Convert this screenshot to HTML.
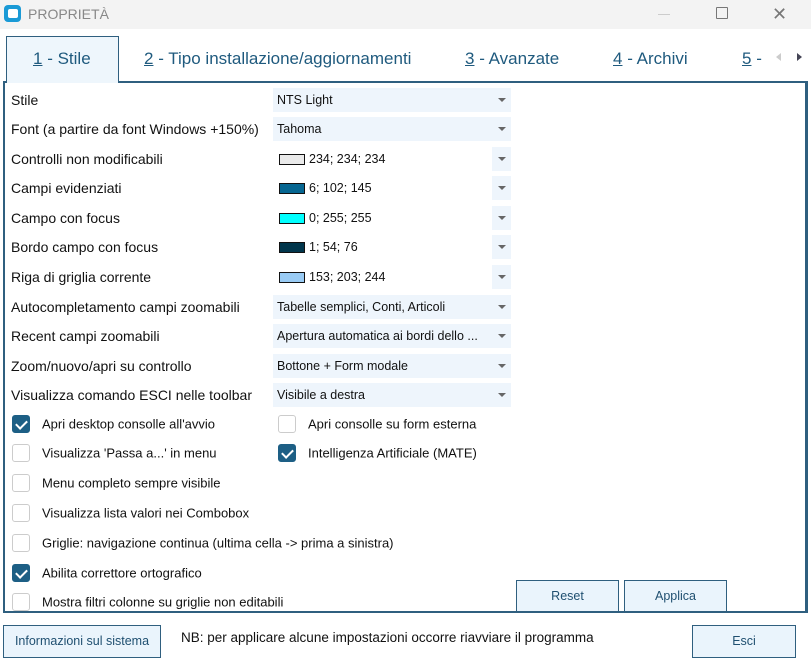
<!DOCTYPE html>
<html><head><meta charset="utf-8"><style>
*{box-sizing:border-box}
body{margin:0;width:811px;height:662px;background:#fff;font-family:"Liberation Sans",sans-serif;position:relative;overflow:hidden;color:#111}
.abs{position:absolute}
.title{left:0;top:0;width:811px;height:29px;background:#f3f3f3}
.tab{font-size:17px;color:#1f5a7e;top:49px}
.tab u{text-decoration:underline}
.lbl{font-size:14px;left:11px;transform:translateY(-50%)}
.cb{left:273px;width:238px;height:24px;background:#eef5fc;font-size:12.5px;padding:0 0 0 4px;line-height:24px;transform:translateY(-50%)}
.arr{position:absolute;right:5px;top:10px;width:0;height:0;border-left:4px solid transparent;border-right:4px solid transparent;border-top:4px solid #666}
.col{left:273px;width:238px;height:24px;transform:translateY(-50%);font-size:12.5px;line-height:24px}
.col .sw{position:absolute;left:6px;top:7px;width:26px;height:11px;border:1px solid #111}
.col .t{position:absolute;left:36px}
.col .db{position:absolute;left:219px;top:0;width:19px;height:24px;background:#eef5fc}
.chk{width:18px;height:18px;border:1px solid #ccc;border-radius:3px;background:#fff;transform:translateY(-50%)}
.chk.on{background:#1d5f85;border-color:#1d5f85}
.chk.on:after{content:"";position:absolute;left:5px;top:2px;width:5px;height:9px;border:solid #fff;border-width:0 2px 2px 0;transform:rotate(45deg)}
.cl{font-size:13px;transform:translateY(-50%)}
.btn{background:#eaf4fc;border:1px solid #2f5f7f;font-size:12.5px;color:#1f4f70;text-align:center}
</style></head><body>
<div class="abs title"></div>
<div class="abs" style="left:4px;top:5px;width:17px;height:17px;background:#1a9ad6;border-radius:4px"></div>
<div class="abs" style="left:8px;top:9px;width:10px;height:9px;background:#fff;border-radius:2px"></div>
<div class="abs" style="left:28px;top:6px;font-size:14px;color:#888">PROPRIETÀ</div>
<div class="abs" style="left:658px;top:14px;width:12px;border-top:1px solid #ccc"></div>
<div class="abs" style="left:716px;top:7px;width:12px;height:12px;border:1px solid #777;border-radius:1px"></div>
<div class="abs" style="left:772px;top:4px;font-size:18px;color:#777">✕</div>

<div class="abs" style="left:3px;top:81px;width:805px;height:532px;border:2px solid #2f5f7f;border-right-width:3px"></div>
<div class="abs" style="left:6px;top:36px;width:113px;height:47px;background:#eef6fc;border:1px solid #2f5f7f;border-bottom:none"></div>
<div class="abs tab" style="left:33px"><u>1</u> - Stile</div>
<div class="abs tab" style="left:144px"><u>2</u> - Tipo installazione/aggiornamenti</div>
<div class="abs tab" style="left:465px"><u>3</u> - Avanzate</div>
<div class="abs tab" style="left:613px"><u>4</u> - Archivi</div>
<div class="abs tab" style="left:742px"><u>5</u> -</div>
<div class="abs" style="left:776px;top:53px;border-right:5px solid #ccc;border-top:4px solid transparent;border-bottom:4px solid transparent"></div>
<div class="abs" style="left:797px;top:53px;border-left:5px solid #445;border-top:4px solid transparent;border-bottom:4px solid transparent"></div>

<div class="abs lbl" style="top:100px">Stile</div>
<div class="abs lbl" style="top:129px">Font (a partire da font Windows +150%)</div>
<div class="abs lbl" style="top:159px">Controlli non modificabili</div>
<div class="abs lbl" style="top:188px">Campi evidenziati</div>
<div class="abs lbl" style="top:218px">Campo con focus</div>
<div class="abs lbl" style="top:247px">Bordo campo con focus</div>
<div class="abs lbl" style="top:277px">Riga di griglia corrente</div>
<div class="abs lbl" style="top:307px">Autocompletamento campi zoomabili</div>
<div class="abs lbl" style="top:336px">Recent campi zoomabili</div>
<div class="abs lbl" style="top:366px">Zoom/nuovo/apri su controllo</div>
<div class="abs lbl" style="top:395px">Visualizza comando ESCI nelle toolbar</div>

<div class="abs cb" style="top:100px">NTS Light<span class="arr"></span></div>
<div class="abs cb" style="top:129px">Tahoma<span class="arr"></span></div>
<div class="abs col" style="top:159px"><span class="sw" style="background:#eaeaea"></span><span class="t">234; 234; 234</span><span class="db"><span class="arr"></span></span></div>
<div class="abs col" style="top:188px"><span class="sw" style="background:#066691"></span><span class="t">6; 102; 145</span><span class="db"><span class="arr"></span></span></div>
<div class="abs col" style="top:218px"><span class="sw" style="background:#00ffff"></span><span class="t">0; 255; 255</span><span class="db"><span class="arr"></span></span></div>
<div class="abs col" style="top:247px"><span class="sw" style="background:#01364c"></span><span class="t">1; 54; 76</span><span class="db"><span class="arr"></span></span></div>
<div class="abs col" style="top:277px"><span class="sw" style="background:#99cbf4"></span><span class="t">153; 203; 244</span><span class="db"><span class="arr"></span></span></div>
<div class="abs cb" style="top:307px">Tabelle semplici, Conti, Articoli<span class="arr"></span></div>
<div class="abs cb" style="top:336px">Apertura automatica ai bordi dello ...<span class="arr"></span></div>
<div class="abs cb" style="top:366px">Bottone + Form modale<span class="arr"></span></div>
<div class="abs cb" style="top:395px">Visibile a destra<span class="arr"></span></div>

<div class="abs chk on" style="left:12px;top:424px"></div><div class="abs cl" style="left:42px;top:424px">Apri desktop consolle all'avvio</div>
<div class="abs chk" style="left:278px;top:424px"></div><div class="abs cl" style="left:308px;top:424px">Apri consolle su form esterna</div>
<div class="abs chk" style="left:12px;top:453px"></div><div class="abs cl" style="left:42px;top:453px">Visualizza 'Passa a...' in menu</div>
<div class="abs chk on" style="left:278px;top:453px"></div><div class="abs cl" style="left:308px;top:453px">Intelligenza Artificiale (MATE)</div>
<div class="abs chk" style="left:12px;top:483px"></div><div class="abs cl" style="left:42px;top:483px">Menu completo sempre visibile</div>
<div class="abs chk" style="left:12px;top:513px"></div><div class="abs cl" style="left:42px;top:513px">Visualizza lista valori nei Combobox</div>
<div class="abs chk" style="left:12px;top:543px"></div><div class="abs cl" style="left:42px;top:543px">Griglie: navigazione continua (ultima cella -&gt; prima a sinistra)</div>
<div class="abs chk on" style="left:12px;top:573px"></div><div class="abs cl" style="left:42px;top:573px">Abilita correttore ortografico</div>
<div class="abs chk" style="left:12px;top:602px"></div><div class="abs cl" style="left:42px;top:602px">Mostra filtri colonne su griglie non editabili</div>

<div class="abs btn" style="left:516px;top:580px;width:103px;height:32px;line-height:30px">Reset</div>
<div class="abs btn" style="left:624px;top:580px;width:103px;height:32px;line-height:30px">Applica</div>
<div class="abs btn" style="left:3px;top:625px;width:158px;height:33px;line-height:31px">Informazioni sul sistema</div>
<div class="abs" style="left:181px;top:630px;font-size:13.5px">NB: per applicare alcune impostazioni occorre riavviare il programma</div>
<div class="abs btn" style="left:692px;top:625px;width:104px;height:33px;line-height:31px">Esci</div>
</body></html>
